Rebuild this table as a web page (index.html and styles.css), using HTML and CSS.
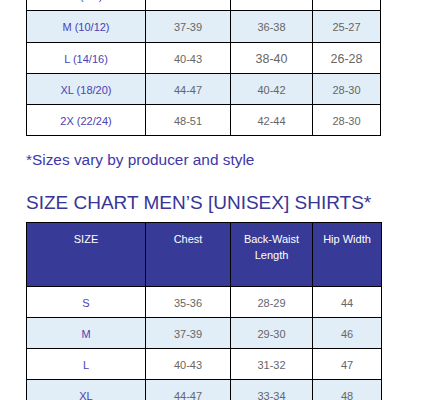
FILE: index.html
```html
<!DOCTYPE html>
<html>
<head>
<meta charset="utf-8">
<link rel="stylesheet" href="styles.css">
</head>
<body>
<div class="page">
  <table class="chart chart-top">
    <colgroup><col class="c1"><col class="c2"><col class="c3"><col class="c4"></colgroup>
    <tbody>
      <tr><td class="size">S (6/8)</td><td>33-36</td><td>34-36</td><td>23-25</td></tr>
      <tr class="alt"><td class="size">M (10/12)</td><td>37-39</td><td>36-38</td><td>25-27</td></tr>
      <tr><td class="size">L (14/16)</td><td>40-43</td><td class="big">38-40</td><td class="big">26-28</td></tr>
      <tr class="alt"><td class="size">XL (18/20)</td><td>44-47</td><td>40-42</td><td>28-30</td></tr>
      <tr><td class="size">2X (22/24)</td><td>48-51</td><td>42-44</td><td>28-30</td></tr>
    </tbody>
  </table>
  <p class="note">*Sizes vary by producer and style</p>
  <h2 class="title">SIZE CHART MEN’S [UNISEX] SHIRTS*</h2>
  <table class="chart chart-men">
    <colgroup><col class="c1"><col class="c2"><col class="c3"><col class="c4w"></colgroup>
    <thead>
      <tr><th>SIZE</th><th>Chest</th><th>Back-Waist<br>Length</th><th>Hip Width</th></tr>
    </thead>
    <tbody>
      <tr><td class="size">S</td><td>35-36</td><td>28-29</td><td>44</td></tr>
      <tr class="alt"><td class="size">M</td><td>37-39</td><td>29-30</td><td>46</td></tr>
      <tr><td class="size">L</td><td>40-43</td><td>31-32</td><td>47</td></tr>
      <tr class="alt"><td class="size">XL</td><td>44-47</td><td>33-34</td><td>48</td></tr>
    </tbody>
  </table>
</div>
</body>
</html>
```
FILE: styles.css
```css
html, body {
  margin: 0;
  padding: 0;
  background: #ffffff;
  overflow: hidden;
}
body {
  font-family: "Liberation Sans", Arial, sans-serif;
}
.page {
  padding-left: 26px;
}
.chart {
  border-collapse: collapse;
  table-layout: fixed;
}
.chart-top {
  width: 355px;
  margin-top: -21px;
}
.chart-men {
  width: 356px;
}
.c1 { width: 119px; }
.c2 { width: 85px; }
.c3 { width: 82px; }
.c4 { width: 68px; }
.c4w { width: 69px; }
.chart td, .chart th {
  border: 1px solid #000;
  text-align: center;
  padding: 0;
}
.chart td {
  height: 30.25px;
  padding-top: 2px;
  box-sizing: border-box;
  font-size: 11px;
  color: #666666;
  vertical-align: middle;
}
.chart-top td {
  height: 31.25px;
}
.chart-men td {
  height: 31px;
}
.chart td.size {
  color: #4a42b4;
}
.chart td.big {
  font-size: 12.5px;
}
.chart tr.alt td {
  background: #e1edf7;
}
.chart th {
  background: #383a97;
  color: #ffffff;
  font-weight: normal;
  font-size: 11px;
  line-height: 16px;
  height: 64px;
  vertical-align: top;
  padding-top: 8px;
  box-sizing: border-box;
}
.note {
  margin: 14px 0 0;
  font-size: 15.4px;
  line-height: 20px;
  color: #3d37aa;
}
.title {
  margin: 21px 0 0;
  font-size: 19px;
  line-height: 24px;
  font-weight: normal;
  color: #383596;
  height: 31px;
}
```
